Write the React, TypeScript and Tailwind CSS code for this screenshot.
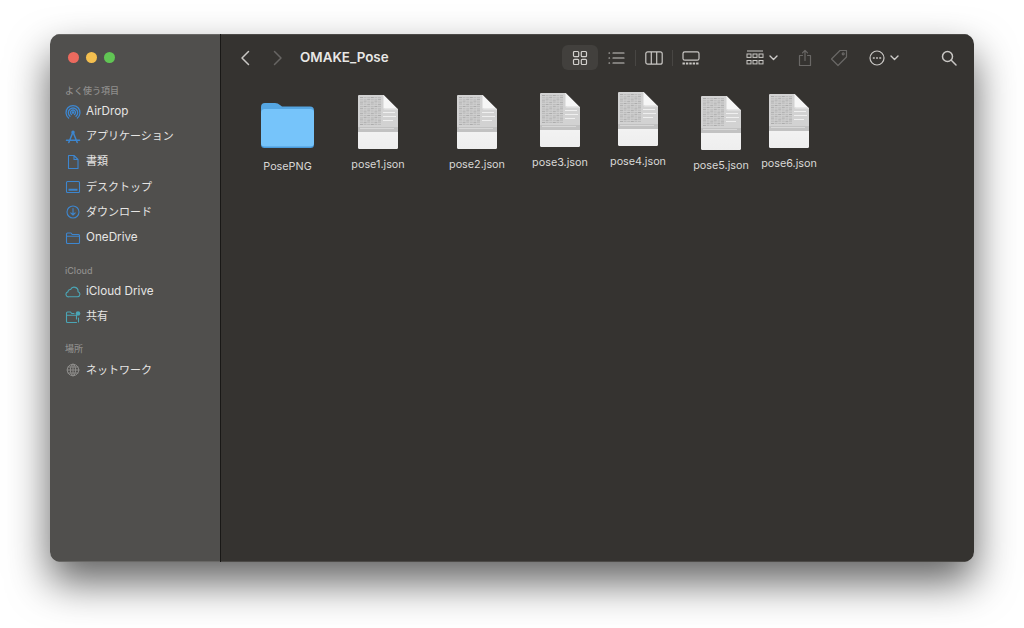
import React from "react";

const FONT = "[font-family:Inter,'Noto_Sans_CJK_JP',sans-serif]";

const DocIcon: React.FC = () => {
    const rows = Array.from({ length: 16 }, (_, i) => i);
    const cols = Array.from({ length: 6 }, (_, i) => i);
    return (
        <svg className="blur-[0.4px]" width="40" height="54" viewBox="0 0 40 54">
            <defs>
                <clipPath id="docClip">
                    <path d="M1.5 0H25.5L40 14.5V52.5Q40 54 38.5 54H1.5Q0 54 0 52.5V1.5Q0 0 1.5 0Z" />
                </clipPath>
                <linearGradient id="docBottom" x1="0" y1="0" x2="0" y2="1">
                    <stop offset="0" stopColor="#fbfbfb" />
                    <stop offset="1" stopColor="#eeeeee" />
                </linearGradient>
            </defs>
            <g clipPath="url(#docClip)">
                <rect width="40" height="54" fill="url(#docBottom)" />
                <rect width="40" height="32" fill="#d2d2d2" />
                <rect y="32" width="40" height="5" fill="#c2c2c2" />
                {rows.map((r) =>
                    cols.map((c) => (
                        <rect
                            key={`${r}-${c}`}
                            x={2 + c * 3.6}
                            y={2 + r * 1.8}
                            width="3"
                            height="1"
                            fill={(r + c) % 3 === 0 ? "#acacac" : "#bcbcbc"}
                        />
                    ))
                )}
                <rect x="25" y="17" width="12" height="1" fill="#efefef" />
                <rect x="25" y="21" width="13" height="1" fill="#eeeeee" />
                <rect x="25" y="25" width="10" height="1" fill="#efefef" />
                <rect x="2" y="33" width="34" height="1" fill="#d8d8d8" />
            </g>
            <path d="M25.5 0L40 14.5H27Q25.5 14.5 25.5 13Z" fill="#f6f6f6" />
            <path d="M25.5 13Q25.5 14.5 27 14.5H40L39 13.5H27Z" fill="#d6d6d6" />
        </svg>
    );
};

const FolderIcon: React.FC = () => (
    <svg width="53" height="45" viewBox="0 0 53 45">
        <path d="M0 4Q0 0 4 0H14Q17 0 19 2L21 3.5H49Q53 3.5 53 7.5V12H0Z" fill="#55a6e2" />
        <rect x="0" y="6" width="53" height="39" rx="3.5" fill="#4a9bdb" />
        <rect x="0" y="6" width="53" height="37.5" rx="3.5" fill="#76c4fa" />
    </svg>
);

const items = [
    { name: "PosePNG", x: 40, y: 69, w: 53, h: 45, labelDy: 12, folder: true },
    { name: "pose1.json", x: 137, y: 61, w: 40, h: 54, labelDy: 9 },
    { name: "pose2.json", x: 236, y: 61, w: 40, h: 54, labelDy: 9 },
    { name: "pose3.json", x: 319, y: 59, w: 40, h: 54, labelDy: 9 },
    { name: "pose4.json", x: 397, y: 58, w: 40, h: 54, labelDy: 9 },
    { name: "pose5.json", x: 480, y: 62, w: 40, h: 54, labelDy: 9 },
    { name: "pose6.json", x: 548, y: 60, w: 40, h: 54, labelDy: 9 },
];

const icon = { fill: "none", strokeLinecap: "round", strokeLinejoin: "round" } as const;

const AirDropIcon = () => (
    <svg width="16" height="16" viewBox="0 0 16 16" stroke="#3d86cf" strokeWidth="1.3" {...icon}>
        <path d="M3.6 14A7 7 0 1 1 12.4 14" />
        <path d="M5 12.3A4.7 4.7 0 1 1 11 12.3" />
        <path d="M6.5 10.5A2.5 2.5 0 1 1 9.5 10.5" />
        <circle cx="8" cy="8.5" r="0.7" fill="#3d86cf" />
    </svg>
);
const AppsIcon = () => (
    <svg width="16" height="16" viewBox="0 0 16 16" stroke="#3d86cf" strokeWidth="1.5" {...icon}>
        <path d="M8 3L3.8 13.5M8 3L12.2 13.5M1.5 11.3H14.5" />
        <circle cx="8" cy="3.2" r="1" fill="#3d86cf" />
    </svg>
);
const DocSideIcon = () => (
    <svg width="16" height="16" viewBox="0 0 16 16" stroke="#3d86cf" strokeWidth="1.1" {...icon}>
        <path d="M3.5 1.5H9L13 5.5V14.5H3.5ZM9 1.5V5.5H13" />
    </svg>
);
const DesktopIcon = () => (
    <svg width="16" height="16" viewBox="0 0 16 16" stroke="#3d86cf" strokeWidth="1.1" {...icon}>
        <rect x="1.5" y="2.5" width="13" height="11" rx="1" />
        <path d="M3.5 10.8H12.5" strokeWidth="2" strokeLinecap="butt" />
    </svg>
);
const DownloadIcon = () => (
    <svg width="16" height="16" viewBox="0 0 16 16" stroke="#3d86cf" strokeWidth="1.1" {...icon}>
        <circle cx="8" cy="8" r="6" />
        <path d="M8 4.5V10.8M5.8 8.8L8 11L10.2 8.8" />
    </svg>
);
const FolderSideIcon = () => (
    <svg width="16" height="16" viewBox="0 0 16 16" stroke="#3d86cf" strokeWidth="1.1" {...icon}>
        <path d="M1.5 4Q1.5 3 2.5 3H6L7.2 4.5H13.5Q14.5 4.5 14.5 5.5V12.5Q14.5 13.5 13.5 13.5H2.5Q1.5 13.5 1.5 12.5ZM1.5 6.3H14.5" />
    </svg>
);
const CloudIcon = () => (
    <svg width="16" height="16" viewBox="0 0 16 16" stroke="#4ba5b5" strokeWidth="1.1" {...icon}>
        <path d="M4 12.8H12.4A2.6 2.6 0 0 0 13 7.7A3.9 3.9 0 0 0 5.6 5.5A2.2 2.2 0 0 0 3 7.9A2.5 2.5 0 0 0 4 12.8Z" />
    </svg>
);
const SharedIcon = () => (
    <svg width="16" height="16" viewBox="0 0 16 16" stroke="#4ba5b5" strokeWidth="1.1" {...icon}>
        <path d="M11.5 13.5H2.5Q1.5 13.5 1.5 12.5V4Q1.5 3 2.5 3H5.5L6.7 4.5H9M1.5 6.3H11.5V10M13.5 9V13" />
        <circle cx="13" cy="4.5" r="2.3" fill="#4ba5b5" stroke="none" />
    </svg>
);
const GlobeIcon = () => (
    <svg width="16" height="16" viewBox="0 0 16 16" stroke="#8c8b89" strokeWidth="1" {...icon}>
        <circle cx="8" cy="8" r="5.8" />
        <ellipse cx="8" cy="8" rx="2.6" ry="5.8" />
        <path d="M2.2 8H13.8M3 5H13M3 11H13M8 2.2V13.8" />
    </svg>
);

const favorites = [
    { label: "AirDrop", icon: <AirDropIcon />, latin: true },
    { label: "アプリケーション", icon: <AppsIcon /> },
    { label: "書類", icon: <DocSideIcon /> },
    { label: "デスクトップ", icon: <DesktopIcon /> },
    { label: "ダウンロード", icon: <DownloadIcon /> },
    { label: "OneDrive", icon: <FolderSideIcon />, latin: true },
];

const SideRow: React.FC<{ label: string; latin?: boolean; children: React.ReactNode }> = ({ label, latin, children }) => (
    <div className="flex items-center h-[25.2px] pl-[15px]">
        <span className="w-[21px] flex justify-start">{children}</span>
        <span className={`${latin ? "text-[11.7px]" : "text-[11px]"} leading-none text-[#e6e5e4] whitespace-nowrap`}>{label}</span>
    </div>
);

const SideLabel: React.FC<{ text: string; className?: string }> = ({ text, className }) => (
    <div className={`pl-[15px] h-[14px] flex items-center text-[9px] font-medium text-[#8f8e8c] ${className ?? ""}`}>{text}</div>
);

const Chevron = () => (
    <svg width="9" height="6" viewBox="0 0 9 6" fill="none" stroke="#cfcdca" strokeWidth="1.4" strokeLinecap="round" strokeLinejoin="round">
        <path d="M1 1L4.5 4.5L8 1" />
    </svg>
);

const Toolbar: React.FC = () => (
    <div className="flex items-center h-[46px] pt-[1px] pl-[19px] text-[#cfcdca]">
        <svg width="11" height="16" viewBox="0 0 11 16" fill="none" stroke="#c9c7c4" strokeWidth="1.5" strokeLinecap="round" strokeLinejoin="round">
            <path d="M8.5 1.5L2 8L8.5 14.5" />
        </svg>
        <svg className="ml-[21px]" width="11" height="16" viewBox="0 0 11 16" fill="none" stroke="#676563" strokeWidth="1.5" strokeLinecap="round" strokeLinejoin="round">
            <path d="M2.5 1.5L9 8L2.5 14.5" />
        </svg>
        <span className="ml-[17px] w-[262px] text-[13.4px] font-semibold text-[#e8e7e5] whitespace-nowrap">OMAKE_Pose</span>

        <div className="w-[36px] h-[25px] rounded-[6px] bg-[#42403d] flex items-center justify-center">
            <svg width="16" height="16" viewBox="0 0 16 16" fill="none" stroke="#d2d0cd" strokeWidth="1.2">
                <rect x="1.5" y="1.5" width="5.2" height="5.2" rx="1" />
                <rect x="9.3" y="1.5" width="5.2" height="5.2" rx="1" />
                <rect x="1.5" y="9.3" width="5.2" height="5.2" rx="1" />
                <rect x="9.3" y="9.3" width="5.2" height="5.2" rx="1" />
            </svg>
        </div>
        <svg className="ml-[10px]" width="17" height="14" viewBox="0 0 17 14" fill="none" stroke="#c9c7c4" strokeWidth="1.2" strokeLinecap="round">
            <path d="M5 2H16M5 7H16M5 12H16M1 2H1.6M1 7H1.6M1 12H1.6" />
        </svg>
        <div className="w-[1px] h-[16px] bg-[#484643] ml-[10px]" />
        <svg className="ml-[9px]" width="18" height="14" viewBox="0 0 18 14" fill="none" stroke="#c9c7c4" strokeWidth="1.2">
            <rect x="0.8" y="0.8" width="16.4" height="12.4" rx="2" />
            <path d="M6.3 1V13M11.7 1V13" />
        </svg>
        <div className="w-[1px] h-[16px] bg-[#484643] ml-[9px]" />
        <svg className="ml-[9px]" width="18" height="14" viewBox="0 0 18 14" fill="none" stroke="#c9c7c4" strokeWidth="1.2">
            <rect x="1" y="0.8" width="16" height="8.4" rx="1.8" />
            <path d="M0.5 12.5H17.5" strokeWidth="1.8" strokeDasharray="2.4 1" />
        </svg>

        <svg className="ml-[46px]" width="18" height="16" viewBox="0 0 18 16" fill="none" stroke="#c9c7c4" strokeWidth="1">
            <path d="M1 1H17" strokeWidth="1.2" />
            <rect x="1" y="4" width="4" height="3.4" />
            <rect x="7" y="4" width="4" height="3.4" />
            <rect x="13" y="4" width="4" height="3.4" />
            <rect x="1" y="10.5" width="4" height="3.4" />
            <rect x="7" y="10.5" width="4" height="3.4" />
            <rect x="13" y="10.5" width="4" height="3.4" />
        </svg>
        <span className="ml-[5px] flex"><Chevron /></span>
        <svg className="ml-[20px]" width="14" height="18" viewBox="0 0 14 18" fill="none" stroke="#6a6866" strokeWidth="1.2" strokeLinecap="round" strokeLinejoin="round">
            <path d="M4.5 6.5H1.5V16.5H12.5V6.5H9.5M7 11.5V1.5M4.5 3.8L7 1.3L9.5 3.8" />
        </svg>
        <svg className="ml-[18px]" width="18" height="18" viewBox="0 0 18 18" fill="none" stroke="#6a6866" strokeWidth="1.2" strokeLinejoin="round">
            <path d="M10 1.5H16.5V8L8 16.5L1.5 10Z" />
            <circle cx="13.2" cy="4.8" r="1" />
        </svg>
        <svg className="ml-[21px]" width="16" height="16" viewBox="0 0 16 16" fill="none" stroke="#c9c7c4" strokeWidth="1.2">
            <circle cx="8" cy="8" r="7" />
            <path d="M4.4 8H5.2M7.6 8H8.4M10.8 8H11.6" strokeWidth="1.5" strokeLinecap="round" />
        </svg>
        <span className="ml-[5px] flex"><Chevron /></span>
        <svg className="ml-[42px]" width="16" height="16" viewBox="0 0 16 16" fill="none" stroke="#c9c7c4" strokeWidth="1.5" strokeLinecap="round">
            <circle cx="6.5" cy="6.5" r="5" />
            <path d="M10.3 10.3L15 15" />
        </svg>
    </div>
);

const App: React.FC = () => {
    return (
        <div className={`w-[1024px] h-[628px] bg-white overflow-hidden pl-[50px] pt-[34px] ${FONT}`}>
            <div className="w-[924px] h-[528px] flex rounded-[10px] overflow-hidden shadow-[0_20px_42px_rgba(0,0,0,0.62)]">
                <aside className="w-[171px] shrink-0 h-full bg-[#504f4d] border-r border-[#191816] pt-[18px] shadow-[inset_0_1px_0_#696866,inset_0_-1px_0_#696866]">
                    <div className="flex gap-[7px] pl-[18px]">
                        <span className="w-[11px] h-[11px] rounded-full bg-[#ec6a5e]" />
                        <span className="w-[11px] h-[11px] rounded-full bg-[#f4bf4f]" />
                        <span className="w-[11px] h-[11px] rounded-full bg-[#61c554]" />
                    </div>
                    <SideLabel text="よく使う項目" className="mt-[21px]" />
                    <div className="mt-[1px]">
                        {favorites.map((f) => (
                            <SideRow key={f.label} label={f.label} latin={f.latin}>{f.icon}</SideRow>
                        ))}
                    </div>
                    <SideLabel text="iCloud" className="mt-[14px]" />
                    <div className="mt-[1px]">
                        <SideRow label="iCloud Drive" latin><CloudIcon /></SideRow>
                        <SideRow label="共有"><SharedIcon /></SideRow>
                    </div>
                    <SideLabel text="場所" className="mt-[12px]" />
                    <div className="mt-[2px]">
                        <SideRow label="ネットワーク"><GlobeIcon /></SideRow>
                    </div>
                </aside>
                <main className="flex-1 h-full bg-[#353330] relative shadow-[inset_0_1px_0_#4c4a47,inset_0_-1px_0_#4c4a47]">
                    <Toolbar />
                    {items.map((it) => (
                        <div key={it.name} className="absolute flex flex-col items-center w-[80px]" style={{ left: it.x + it.w / 2 - 40, top: it.y }}>
                            {it.folder ? <FolderIcon /> : <DocIcon />}
                            <span className="text-[10.8px] leading-[14px] text-[#d9d8d6] whitespace-nowrap" style={{ marginTop: it.labelDy }}>
                                {it.name}
                            </span>
                        </div>
                    ))}
                </main>
            </div>
        </div>
    );
};

export default App;
